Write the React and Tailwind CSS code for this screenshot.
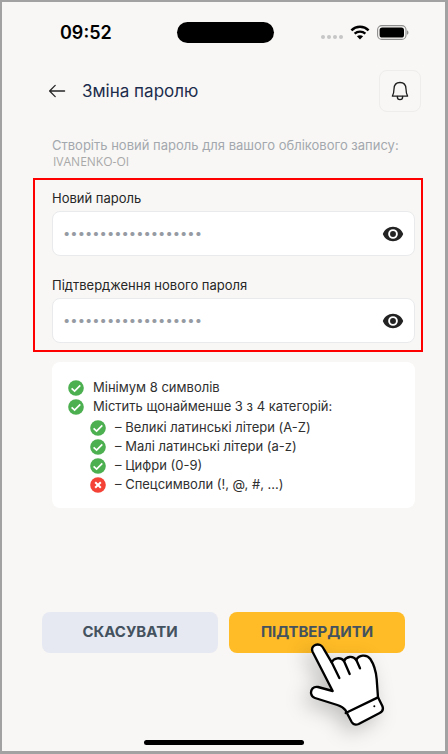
import React, { useState } from 'react';

const INTER = "font-['Inter','Liberation_Sans',sans-serif]";

const RULES = [
  { text: 'Мінімум 8 символів', ok: true },
  { text: 'Містить щонайменше 3 з 4 категорій:', ok: true },
];

const CATEGORIES = [
  { text: '– Великі латинські літери (A-Z)', ok: true },
  { text: '– Малі латинські літери (a-z)', ok: true },
  { text: '– Цифри (0-9)', ok: true },
  { text: '– Спецсимволи (!, @, #, ...)', ok: false },
];

function WifiIcon() {
  return (
    <svg viewBox="0 0 20 15" className="h-[15px] w-5" aria-hidden="true">
      <path d="M1.4 5.3C6.2.7 13.8.7 18.6 5.3" fill="none" stroke="#000" strokeWidth="2.5" />
      <path d="M4.6 8.7C7.7 5.9 12.3 5.9 15.4 8.7" fill="none" stroke="#000" strokeWidth="2.3" />
      <path d="M10 14.4 6.9 11.3c1.8-1.5 4.4-1.5 6.2 0z" fill="#000" />
    </svg>
  );
}

function BatteryIcon() {
  return (
    <svg viewBox="0 0 32 15" className="h-[15px] w-8" aria-hidden="true">
      <rect x=".6" y=".6" width="28.4" height="13.8" rx="4.2" fill="none" stroke="#8d8d8d" strokeWidth="1.1" />
      <rect x="2.6" y="2.5" width="24.4" height="10" rx="2.6" fill="#000" />
      <path d="M30.2 5.2c1.6.7 1.6 3.9 0 4.6z" fill="#777" />
    </svg>
  );
}

function ArrowIcon() {
  return (
    <svg viewBox="0 0 18 14" className="h-[14px] w-[18px]" fill="none" stroke="#262626" strokeWidth="1.3" strokeLinecap="round" strokeLinejoin="round" aria-hidden="true">
      <path d="M16.6 7H1.6M7.2 1.4 1.6 7 7.2 12.6" />
    </svg>
  );
}

function BellIcon() {
  return (
    <svg viewBox="0 0 18 20" className="h-5 w-[18px]" fill="none" stroke="#1f1f1f" strokeWidth="1.3" strokeLinejoin="round" strokeLinecap="round" aria-hidden="true">
      <path d="M1.4 15.2C2.7 13 2.9 11.5 3 8 3.1 4 5.4 1.5 9 1.500S14.9 4 15 8c.1 3.5.3 5 1.600 7.200z" />
      <path d="M6.3 15.4c0 1.9 1.1 3.2 2.7 3.2s2.7-1.3 2.7-3.2" />
    </svg>
  );
}

function EyeIcon() {
  return (
    <svg viewBox="0 0 22 16" className="h-4 w-[22px]" aria-hidden="true">
      <path d="M11 .8C6.3.8 2.4 3.7.8 8c1.6 4.3 5.5 7.2 10.2 7.2S19.6 12.3 21.2 8C19.6 3.7 15.7.8 11 .8z" fill="#232323" />
      <circle cx="11" cy="8" r="3.9" fill="#232323" stroke="#fff" strokeWidth="1.9" />
    </svg>
  );
}

function StatusIcon({ ok }) {
  return (
    <svg viewBox="0 0 16 16" className="size-4 shrink-0" fill="none" stroke="#fff" aria-hidden="true">
      <circle cx="8" cy="8" r="7.8" fill={ok ? '#4caf50' : '#f44336'} stroke="none" />
      {ok
        ? <path d="M3.6 8.3 6.6 11.1 12.3 5.3" strokeWidth="1.7" />
        : <path d="M5.2 5.2 10.8 10.8M10.8 5.2 5.2 10.8" strokeWidth="2" />}
    </svg>
  );
}

function HandPointer() {
  return (
    <svg
      viewBox="0 0 270 300"
      className="pointer-events-none absolute left-[71px] top-6 h-[100px] w-[90px] overflow-visible drop-shadow-[-6px_6px_10px_rgba(0,0,0,0.22)]"
      fill="#fff" stroke="#000" strokeWidth="7" strokeLinejoin="round" strokeLinecap="round" aria-hidden="true"
    >
      <path d="M98 165 38 48C31 32 46 22 61 27c5 2 8 7 11 13L95 79c6-14 27-17 37-4 6-14 27-17 37-3 6-15 31-19 42-3 10 15 17 38 19 60l4 55 13 26c4 10 0 17-8 21l-63 33c-9 4-16 2-21-6l-19-36c-6-8-14-12-24-15l-67-21C33 182 29 168 38 157c4-4 10-5 16-4z" />
      <path d="M95 79 118 126M132 75 149 114M169 72 180 97M137 231 234 184" fill="none" />
      <circle cx="223" cy="211" r="3" fill="#000" stroke="none" />
    </svg>
  );
}

function PasswordField({ id, label }) {
  const [value, setValue] = useState('Password-Example-19');
  const [visible, setVisible] = useState(false);

  return (
    <div>
      <label htmlFor={id} className="block text-[13px] leading-5 text-[#262626]">{label}</label>
      <div className="mt-[3px] flex h-[45px] items-center rounded-lg border border-[#e9eaec] bg-white px-[10px]">
        <input
          id={id}
          type={visible ? 'text' : 'password'}
          value={value}
          onChange={e => setValue(e.target.value)}
          className="min-w-0 flex-1 bg-transparent text-[13px] text-[#969ba3] outline-none"
        />
        <button type="button" aria-label="Показати пароль" onClick={() => setVisible(!visible)}>
          <EyeIcon />
        </button>
      </div>
    </div>
  );
}

function Rule({ rule }) {
  return (
    <li className="flex items-center gap-[9px] text-[13px] leading-[19px] text-[#303030]">
      <StatusIcon ok={rule.ok} />
      <span>{rule.text}</span>
    </li>
  );
}

export default function App() {
  return (
    <div className={`flex min-h-screen flex-col border-2 border-b-[3px] border-r-[3px] border-[#a2a2a2] bg-[#f8f7f5] ${INTER}`}>
      {/* Status bar */}
      <div className="mt-5 grid grid-cols-[1fr_auto_1fr] items-center pl-1">
        <span className="pl-[54px] text-lg font-semibold leading-[21px] text-black">09:52</span>
        <span className="h-[21px] w-[97px] rounded-full bg-black" />
        <div className="flex items-center justify-end gap-[7px] pr-9">
          <div className="flex gap-[2px] pt-[9px]">
            {[0, 1, 2, 3].map(i => <span key={i} className="size-1 rounded-full bg-[#c6c6c6]" />)}
          </div>
          <WifiIcon />
          <BatteryIcon />
        </div>
      </div>

      {/* Header */}
      <header className="mt-[27px] flex items-center pl-[46px] pr-6">
        <button type="button" aria-label="Назад"><ArrowIcon /></button>
        <h1 className="ml-4 flex-1 text-[17px] leading-6 text-[#1c2c4c]">Зміна паролю</h1>
        <button type="button" aria-label="Сповіщення" className="flex size-[42px] items-center justify-center rounded-lg border border-[#eeedeb]">
          <BellIcon />
        </button>
      </header>

      <main>
        <p className="mt-6 pl-[50px] text-[13px] leading-[18px] text-[#a3a8ae]">
          Створіть новий пароль для вашого облікового запису:
          <span className="block pl-px font-['Open_Sans',sans-serif] text-xs leading-4 text-[#a8a8a8]">IVANENKO-OI</span>
        </p>

        <section className="ml-[31px] mr-[22px] mt-2 space-y-[19px] border-2 border-[#ff0000] pb-[7px] pl-[17px] pr-[6px] pt-2">
          <PasswordField id="new-password" label="Новий пароль" />
          <PasswordField id="confirm-password" label="Підтвердження нового пароля" />
        </section>

        <section className="ml-[50px] mr-[30px] mt-[10px] rounded-lg bg-white px-4 pb-[14px] pt-4">
          <ul>
            {RULES.map(rule => <Rule key={rule.text} rule={rule} />)}
          </ul>
          <ul className="mt-[2px] pl-[22px]">
            {CATEGORIES.map(rule => <Rule key={rule.text} rule={rule} />)}
          </ul>
        </section>
      </main>

      <footer className="mt-auto">
        <div className="flex gap-[11px] px-10 text-[15px] font-bold text-[#44525f]">
          <button type="button" className="h-[41px] flex-1 rounded-lg bg-[#e6e9f1]">СКАСУВАТИ</button>
          <div className="relative flex-1">
            <button type="button" className="h-[41px] w-full rounded-lg bg-[#ffbc26]">ПІДТВЕРДИТИ</button>
            <HandPointer />
          </div>
        </div>
        <div className="mx-auto mb-[6px] mt-[87px] h-[5px] w-40 rounded-full bg-black" />
      </footer>
    </div>
  );
}
